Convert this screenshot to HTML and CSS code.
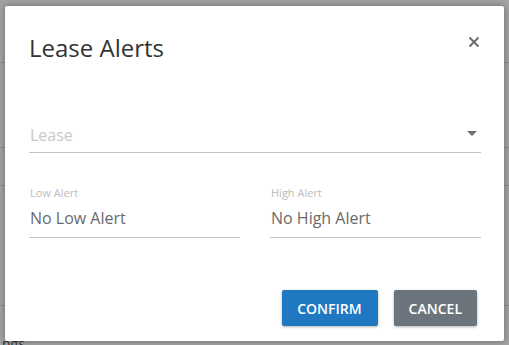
FILE: index.html
```html
<!DOCTYPE html>
<html lang="en">
<head>
<meta charset="utf-8">
<title>Lease Alerts</title>
<link rel="stylesheet" href="styles.css">
</head>
<body>
<div class="page">
  <div class="rule rule-a"></div>
  <div class="rule rule-b"></div>
  <div class="rule rule-c"></div>
  <div class="rule rule-d"></div>
  <div class="page-text">ngs</div>
</div>
<div class="backdrop">
  <div class="modal" role="dialog" aria-labelledby="modal-title">
    <div class="modal-header">
      <h1 class="modal-title" id="modal-title">Lease Alerts</h1>
      <button class="close" type="button" aria-label="Close">
        <svg width="12" height="12" viewBox="0 0 12 12"><path d="M1.5 1.5 L10.5 10.5 M10.5 1.5 L1.5 10.5" stroke="#6e6e6e" stroke-width="2" fill="none"/></svg>
      </button>
    </div>
    <div class="field select-field">
      <span class="placeholder">Lease</span>
      <svg class="caret" width="10" height="5" viewBox="0 0 10 5"><path d="M0 0 L10 0 L5 5 Z" fill="#6e6e6e"/></svg>
    </div>
    <div class="alert-row">
      <div class="alert-col">
        <div class="label">Low Alert</div>
        <div class="field value-field">No Low Alert</div>
      </div>
      <div class="alert-col">
        <div class="label">High Alert</div>
        <div class="field value-field">No High Alert</div>
      </div>
    </div>
    <div class="actions">
      <button class="btn btn-primary" type="button">CONFIRM</button>
      <button class="btn btn-secondary" type="button">CANCEL</button>
    </div>
  </div>
</div>
</body>
</html>
```

FILE: styles.css
```css
html, body {
  margin: 0;
  padding: 0;
  width: 509px;
  height: 345px;
  overflow: hidden;
}
body {
  background: #a3a3a3;
  font-family: "Open Sans", "Liberation Sans", sans-serif;
  position: relative;
}
.page {
  display: flex;
  flex-direction: column;
}
.rule {
  height: 1px;
  background: #8c8c8c;
}
.rule-a { margin-top: 62px; }
.rule-b { margin-top: 84px; }
.rule-c { margin-top: 37px; }
.rule-d { margin-top: 119px; }
.page-text {
  margin-top: 29px;
  margin-left: 2px;
  font-size: 14px;
  line-height: 18px;
  color: #333;
}
.backdrop {
  position: absolute;
  top: 0;
  left: 0;
  width: 509px;
  height: 345px;
  padding: 6px 5px 0 5px;
  box-sizing: border-box;
}
.modal {
  width: 499px;
  height: 335px;
  background: #fff;
  border-radius: 2px;
  box-shadow: 0 0 7px rgba(0, 0, 0, 0.35);
  box-sizing: border-box;
  padding: 0 23px 0 24px;
  display: flex;
  flex-direction: column;
}
.modal-header {
  display: flex;
  justify-content: space-between;
  align-items: flex-start;
  margin-top: 27px;
}
.modal-title {
  margin: 0;
  font-size: 24px;
  line-height: 30px;
  font-weight: 400;
  color: #333;
}
.close {
  margin: 3px 1px 0 0;
  padding: 0;
  border: 0;
  background: none;
  width: 12px;
  height: 12px;
  display: flex;
}
.field {
  border-bottom: 1px solid #c4c4c4;
  font-size: 16px;
  line-height: 24px;
  padding-bottom: 5px;
  display: flex;
  align-items: center;
  justify-content: space-between;
}
.select-field {
  margin-top: 60px;
}
.placeholder {
  color: #c8c8c8;
  padding-left: 1px;
}
.caret {
  margin-right: 4px;
  margin-top: -4px;
}
.alert-row {
  display: grid;
  grid-template-columns: 1fr 1fr;
  column-gap: 30px;
  margin-top: 32px;
}
.label {
  font-size: 11px;
  line-height: 15px;
  color: #bdbdbd;
  padding-left: 1px;
}
.value-field {
  margin-top: 6px;
  padding-bottom: 7px;
  color: #6a6a6a;
  padding-left: 1px;
}
.actions {
  display: flex;
  justify-content: flex-end;
  gap: 16px;
  margin-top: auto;
  margin-bottom: 15px;
  margin-right: 4px;
}
.btn {
  height: 36px;
  border: 0;
  border-radius: 2px;
  padding: 0 15px;
  font-family: "Open Sans", "Liberation Sans", sans-serif;
  font-size: 14px;
  font-weight: 600;
  color: #fff;
  box-shadow: 0 1px 3px rgba(0, 0, 0, 0.3);
}
.btn-primary {
  background: #1f78c1;
  padding: 0 16px 0 15px;
}
.btn-secondary {
  background: #6c757d;
}
```
